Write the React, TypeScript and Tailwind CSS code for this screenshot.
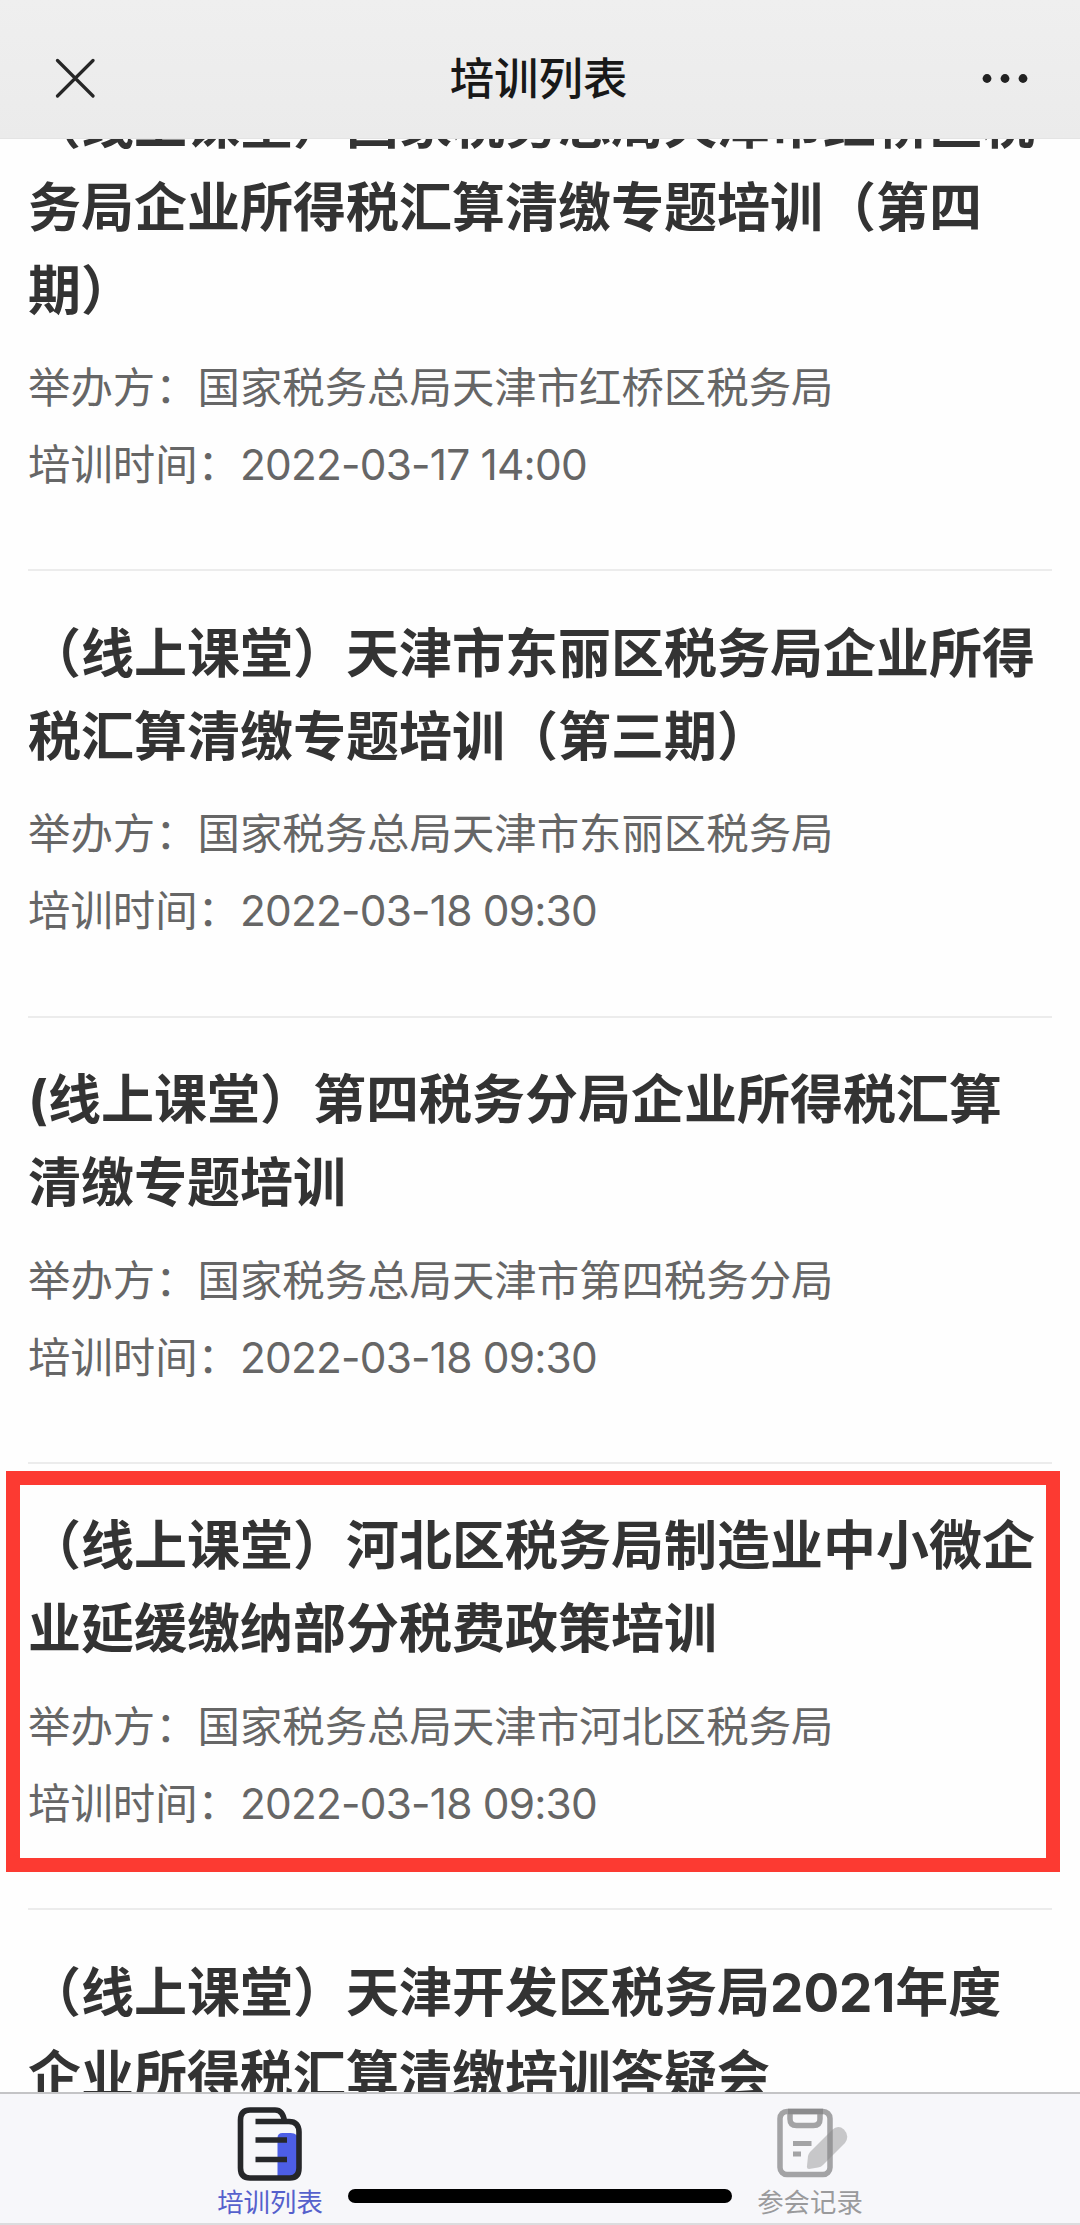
type Training = {
  lines: string[];
  organizer?: string;
  time?: string;
  highlighted?: boolean;
};

const trainings: Training[] = [
  {
    lines: ["（线上课堂）国家税务总局天津市红桥区税", "务局企业所得税汇算清缴专题培训（第四", "期）"],
    organizer: "国家税务总局天津市红桥区税务局",
    time: "2022-03-17 14:00",
  },
  {
    lines: ["（线上课堂）天津市东丽区税务局企业所得", "税汇算清缴专题培训（第三期）"],
    organizer: "国家税务总局天津市东丽区税务局",
    time: "2022-03-18 09:30",
  },
  {
    lines: ["(线上课堂）第四税务分局企业所得税汇算", "清缴专题培训"],
    organizer: "国家税务总局天津市第四税务分局",
    time: "2022-03-18 09:30",
  },
  {
    lines: ["（线上课堂）河北区税务局制造业中小微企", "业延缓缴纳部分税费政策培训"],
    organizer: "国家税务总局天津市河北区税务局",
    time: "2022-03-18 09:30",
    highlighted: true,
  },
  {
    lines: ["（线上课堂）天津开发区税务局2021年度", "企业所得税汇算清缴培训答疑会"],
  },
];

function Header() {
  return (
    <header className="z-10 flex h-[139px] shrink-0 items-start justify-between border-b border-[#e4e4e4] bg-linear-to-b from-[#efefef] to-[#ebebeb] pr-[50px] pl-[55px] pt-[46px]">
      <svg className="h-16 w-10" viewBox="0 0 40 64" fill="none" stroke="#262626" strokeWidth="3.2" strokeLinecap="round">
        <path d="M2.5 14.5 38 50M38 14.5 2.5 50" />
      </svg>
      <h1 className="pt-px text-[44.4px] leading-16 font-medium text-[#181818]">培训列表</h1>
      <svg className="h-16 w-12" viewBox="0 0 48 64" fill="#222">
        <circle cx="5" cy="32.5" r="4.4" />
        <circle cx="23" cy="32.5" r="4.4" />
        <circle cx="41" cy="32.5" r="4.4" />
      </svg>
    </header>
  );
}

function TrainingItem({ lines, organizer, time, highlighted }: Training) {
  return (
    <li className="relative mx-7 shrink-0 border-b-2 border-[#ececec] pt-[41.500px] pb-[66.300px] last:border-b-0 last:pb-0">
      {highlighted && (
        <div className="absolute -left-[22px] top-[7px] h-[401px] w-[1054px] border-[14.5px] border-[#fc3a32]" />
      )}
      <h2 className="mr-[-28px] text-[53px] leading-[83px] font-bold whitespace-nowrap text-[#333]">
        {lines.map((line) => (
          <span key={line} className="block">
            {line}
          </span>
        ))}
      </h2>
      {organizer && (
        <div className="mt-[16.500px] text-[42.4px] leading-[77px] whitespace-nowrap text-[#666]">
          <p>举办方：{organizer}</p>
          <p>
            培训时间：<span className="tracking-[-0.8px]">{time}</span>
          </p>
        </div>
      )}
    </li>
  );
}

function ListIcon() {
  return (
    <svg className="h-[76px] w-[68px]" viewBox="0 0 68 76" fill="none">
      <path d="M41.5 71V32q0-5 5-5h8q8 0 8 8v28q0 8-8 8z" fill="#4d5ee6" />
      <path d="M48.5 15.500Q47 4 39 4H14Q4.500 4 4.500 14V62Q4.500 72 14 72H54Q63 72 63 62V26Q63 15.500 53 15.500H19.500" stroke="#26272a" strokeWidth="5.6" />
      <path d="M19.500 34H51M19.500 53.500H51" stroke="#26272a" strokeWidth="5.6" />
    </svg>
  );
}

function RecordIcon() {
  return (
    <svg className="h-[76px] w-[76px]" viewBox="0 0 76 76" fill="none">
      <rect x="8" y="5.500" width="50" height="63" rx="7" stroke="#a3a3a5" strokeWidth="5.500" />
      <path d="M18 3V13Q18 19.500 24.500 19.500H41.500Q48 19.500 48 13V3" stroke="#a3a3a5" strokeWidth="5.500" />
      <path d="M16 2.700H51V8.300H16z" fill="#8b8b8d" />
      <path d="M21 37.500H39.500M21 48H29" stroke="#a3a3a5" strokeWidth="5" />
      <path d="M35 60L36 50Q36.500 48 38 46L60 24Q66 18.500 72 23.500Q78 30 73 37L51 59Q49 61 46 61.500L37 63Q34.500 63 35 60Z" fill="#858585" fillOpacity=".42" />
    </svg>
  );
}

function TabBar() {
  return (
    <nav className="relative grid h-[133px] shrink-0 grid-cols-2 border-y-2 border-t-[#c4c4c6] border-b-[#dcdcde] bg-[#f7f7fa]">
      <div className="flex flex-col items-center pt-3 text-[26.4px] leading-10 text-[#5560cc]">
        <ListIcon />
        <span>培训列表</span>
      </div>
      <div className="flex flex-col items-center pt-3 text-[26.4px] leading-10 text-[#9a9a9c]">
        <RecordIcon />
        <span>参会记录</span>
      </div>
      <div className="absolute top-[95px] left-[348px] h-3.5 w-96 rounded-full bg-black" />
    </nav>
  );
}

export default function App() {
  return (
    <div className="flex h-[2225px] w-[1080px] flex-col overflow-hidden bg-[#fefefe] font-[Inter,'Noto_Sans_CJK_SC',sans-serif]" lang="zh-CN">
      <Header />
      <main className="min-h-0 flex-1 overflow-hidden">
        <ul className="-mt-[97px] flex flex-col">
          {trainings.map((item) => (
            <TrainingItem key={item.lines[0]} {...item} />
          ))}
        </ul>
      </main>
      <TabBar />
    </div>
  );
}
